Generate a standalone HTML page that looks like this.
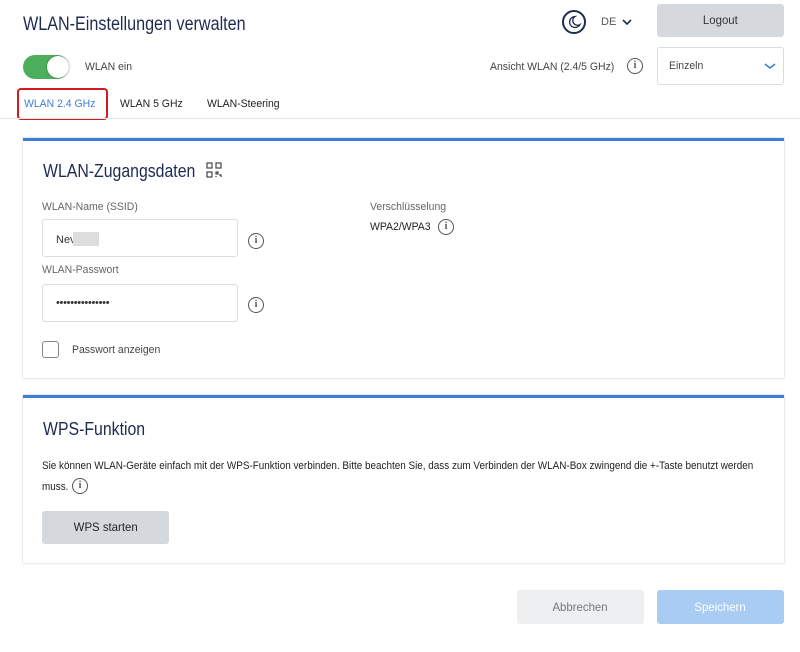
<!DOCTYPE html>
<html><head><meta charset="utf-8"><style>
*{box-sizing:border-box;margin:0;padding:0}
body{width:800px;height:652px;background:#fff;font-family:"Liberation Sans",sans-serif;position:relative;overflow:hidden;color:#333}
.a{position:absolute;white-space:nowrap}
.c{display:inline-block;transform-origin:0 50%;transform:scaleX(.95)}
.info{position:absolute;width:16px;height:16px;border:1.4px solid #555;border-radius:50%;font:bold 10px "Liberation Serif",serif;text-align:center;line-height:13px;color:#555}
.btn{position:absolute;border-radius:3px;font-size:12px;text-align:center}
.card{position:absolute;left:23px;width:761px;border-top:3px solid #3d7fd6;box-shadow:0 0 2px rgba(0,0,0,.25);background:#fff}
.inp{position:absolute;left:42px;width:196px;height:38px;border:1px solid #ddd;border-radius:3px}
.lbl{font-size:11px;color:#666}
</style></head><body>
<div class="a" style="left:23px;top:14px;font-size:19px;color:#1e2b4f"><span class="c" style="transform:scaleX(.85)">WLAN-Einstellungen verwalten</span></div>
<div class="a" style="left:562px;top:10px;width:24px;height:24px;border:2px solid #1e2b4f;border-radius:50%"></div>
<svg class="a" style="left:566px;top:14px" width="16" height="16" viewBox="0 0 16 16"><path d="M9 2.5a5.5 5.5 0 1 0 5 8 4.5 4.5 0 0 1-5-8z" fill="none" stroke="#1e2b4f" stroke-width="1.3"/></svg>
<div class="a" style="left:601px;top:16px;font-size:11px;color:#555">DE</div>
<svg class="a" style="left:621px;top:18px" width="12" height="8" viewBox="0 0 12 8"><path d="M2 2l4 4 4-4" fill="none" stroke="#1e2b4f" stroke-width="1.6"/></svg>
<div class="btn" style="left:657px;top:4px;width:127px;height:33px;background:#d5d9de;line-height:33px;color:#333"><span class="c" style="transform-origin:50% 50%">Logout</span></div>

<div class="a" style="left:23px;top:55px;width:46px;height:24px;border-radius:12px;background:#4caf5b"></div>
<div class="a" style="left:47px;top:56px;width:22px;height:22px;border-radius:50%;background:#fff;box-shadow:0 0 2px rgba(0,0,0,.4)"></div>
<div class="a" style="left:85px;top:61px;font-size:11px;color:#444"><span class="c">WLAN ein</span></div>
<div class="a" style="left:490px;top:61px;font-size:11px;color:#444"><span class="c">Ansicht WLAN (2.4/5 GHz)</span></div>
<div class="info" style="left:627px;top:58px">i</div>
<div class="a" style="left:657px;top:47px;width:127px;height:38px;border:1px solid #ddd;border-radius:3px"></div>
<div class="a" style="left:669px;top:60px;font-size:11px;color:#444"><span class="c">Einzeln</span></div>
<svg class="a" style="left:763px;top:62px" width="14" height="8" viewBox="0 0 14 8"><path d="M2 2l5 4 5-4" fill="none" stroke="#3d7fd6" stroke-width="1.6"/></svg>

<div class="a" style="left:17px;top:88px;width:91px;height:32px;border:2px solid #d01c1c;border-radius:4px"></div>
<div class="a" style="left:24px;top:98px;font-size:11px;color:#3d7fd6"><span class="c">WLAN 2.4 GHz</span></div>
<div class="a" style="left:120px;top:98px;font-size:11px;color:#222"><span class="c">WLAN 5 GHz</span></div>
<div class="a" style="left:207px;top:98px;font-size:11px;color:#222"><span class="c">WLAN-Steering</span></div>
<div class="a" style="left:0;top:118px;width:800px;height:1px;background:#e2e2e2"></div>

<div class="card" style="top:138px;height:240px"></div>
<div class="a" style="left:43px;top:161px;font-size:18px;color:#1e2b4f"><span class="c" style="transform:scaleX(.88)">WLAN-Zugangsdaten</span></div>
<svg class="a" style="left:206px;top:162px" width="16" height="16" viewBox="0 0 16 16" fill="none" stroke="#444" stroke-width="1.2"><rect x="1" y="1" width="5" height="5"/><rect x="10" y="1" width="5" height="5"/><rect x="1" y="10" width="5" height="5"/><path d="M10 10h2v2h-2zM13 13h2v2M10 14v1"/></svg>
<div class="a lbl" style="left:42px;top:201px"><span class="c">WLAN-Name (SSID)</span></div>
<div class="inp" style="top:219px"></div>
<div class="a" style="left:56px;top:234px;font-size:11px;color:#333">Nev</div>
<div class="a" style="left:73px;top:232px;width:26px;height:14px;background:#ddd"></div>
<div class="info" style="left:248px;top:233px">i</div>
<div class="a lbl" style="left:370px;top:201px"><span class="c">Verschlüsselung</span></div>
<div class="a" style="left:370px;top:221px;font-size:11px;color:#222"><span class="c">WPA2/WPA3</span></div>
<div class="info" style="left:438px;top:219px">i</div>
<div class="a lbl" style="left:42px;top:264px"><span class="c">WLAN-Passwort</span></div>
<div class="inp" style="top:284px"></div>
<div class="a" style="left:56px;top:297px;font-size:11px;color:#333;letter-spacing:-0.3px">•••••••••••••••</div>
<div class="info" style="left:248px;top:297px">i</div>
<div class="a" style="left:42px;top:341px;width:17px;height:17px;border:1.4px solid #888;border-radius:3px"></div>
<div class="a" style="left:72px;top:344px;font-size:11px;color:#444"><span class="c">Passwort anzeigen</span></div>

<div class="card" style="top:395px;height:168px"></div>
<div class="a" style="left:43px;top:419px;font-size:18px;color:#1e2b4f"><span class="c" style="transform:scaleX(.88)">WPS-Funktion</span></div>
<div class="a" style="left:42px;top:460px;font-size:11px;color:#222"><span class="c" style="transform:scaleX(.90)">Sie können WLAN-Geräte einfach mit der WPS-Funktion verbinden. Bitte beachten Sie, dass zum Verbinden der WLAN-Box zwingend die +-Taste benutzt werden</span></div>
<div class="a" style="left:42px;top:481px;font-size:11px;color:#222"><span class="c" style="transform:scaleX(.90)">muss.</span></div>
<div class="info" style="left:72px;top:478px">i</div>
<div class="btn" style="left:42px;top:511px;width:127px;height:33px;background:#d5d9de;line-height:33px;color:#222"><span class="c" style="transform-origin:50% 50%">WPS starten</span></div>

<div class="btn" style="left:517px;top:590px;width:127px;height:34px;background:#eeeff1;line-height:34px;color:#777"><span class="c" style="transform-origin:50% 50%">Abbrechen</span></div>
<div class="btn" style="left:657px;top:590px;width:127px;height:34px;background:#a9ccf3;line-height:34px;color:#fff"><span class="c" style="transform-origin:50% 50%">Speichern</span></div>
</body></html>
